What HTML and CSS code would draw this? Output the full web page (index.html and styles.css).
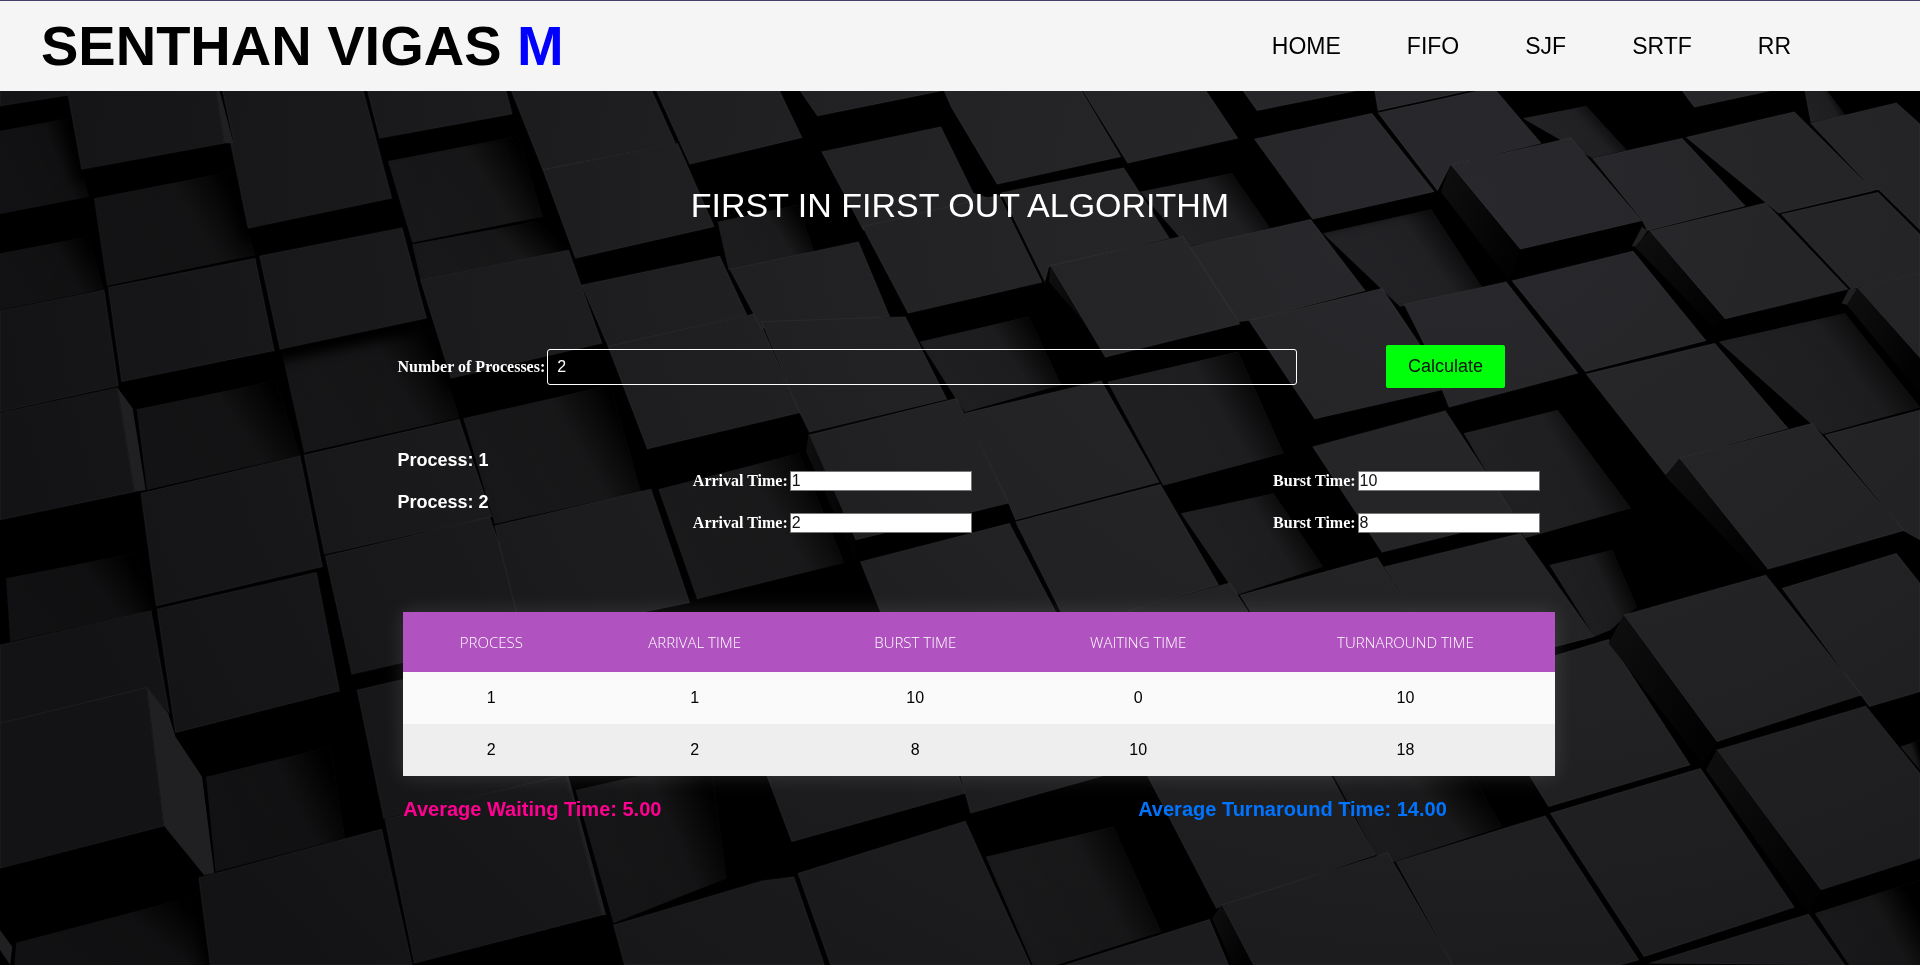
FILE: index.html
```html
<!DOCTYPE html>
<html lang="en">
<head>
<meta charset="utf-8">
<title>FIFO Scheduling</title>
<link rel="stylesheet" href="styles.css">
</head>
<body>
<svg class="backdrop" viewBox="0 0 1920 965" preserveAspectRatio="xMidYMid slice" aria-hidden="true">
  <defs>
    <radialGradient id="lit" gradientUnits="userSpaceOnUse" cx="3600" cy="600" r="3700">
      <stop offset="0" stop-color="#29292d"/>
      <stop offset="0.4" stop-color="#222224"/>
      <stop offset="0.75" stop-color="#19191b"/>
      <stop offset="1" stop-color="#131315"/>
    </radialGradient>
    <linearGradient id="sunk" x1="0.1" y1="0.8" x2="1" y2="0.4">
      <stop offset="0" stop-color="#000" stop-opacity="0.1"/>
      <stop offset="0.65" stop-color="#000" stop-opacity="0.2"/>
      <stop offset="0.95" stop-color="#000" stop-opacity="0.9"/>
      <stop offset="1" stop-color="#000"/>
    </linearGradient>
    <linearGradient id="wall" x1="0" y1="0" x2="1" y2="0.6">
      <stop offset="0" stop-color="#0f0f10"/>
      <stop offset="1" stop-color="#020202"/>
    </linearGradient>
    <filter id="soft" x="0" y="0" width="1" height="1" color-interpolation-filters="sRGB"><feGaussianBlur stdDeviation="0.6"/></filter>
    <filter id="cast" x="-0.05" y="-0.05" width="1.1" height="1.1" color-interpolation-filters="sRGB"><feGaussianBlur stdDeviation="16"/></filter>
    <g id="pits">
      <path d="M0 392L168 355 218 590 0 642z"/>
      <path d="M230 595L565 515 625 765 262 858z"/>
      <path d="M0 760L215 710 255 868 0 930z"/>
      <path d="M950 483L1270 408 1330 650 1010 728z"/>
      <path d="M1010 733L1310 665 1393 750 1030 840z"/>
      <path d="M335 1228L675 1142 735 1365 360 1470z"/>
      <path d="M690 1055L1050 963 1125 1253 745 1358z"/>
      <path d="M1135 1255L1495 1155 1570 1475 1212 1572z"/>
      <path d="M15 1735L330 1660 378 1830 25 1925z"/>
      <path d="M505 2330L810 2240 845 2515 528 2615z"/>
      <path d="M40 2828L485 2685 520 2895 35 2895z"/>
      <path d="M1410 2370L1740 2280 1780 2635 1503 2770z"/>
      <path d="M2415 2570L2728 2480 2845 2795 2590 2895 2530 2895z"/>
      <path d="M3266 2325L3605 2325 3680 2480 3416 2585 3370 2565z"/>
      <path d="M4446 2740L4704 2640V2895H4530z"/>
      <path d="M4656 2240L4704 2220V2310z"/>
      <path d="M2793 575L3018 520 3115 690 2910 740z"/>
      <path d="M3731 355L3886 318 3985 450 3900 474z"/>
      <path d="M4421 272H4476L4521 345 4436 368z"/>
      <path d="M3241 700L3506 628 3630 860 3430 920z"/>
      <path d="M4211 1025L4520 940 4704 1222 4466 1303z"/>
      <path d="M3586 1300L3816 1230 3996 1525 3736 1615z"/>
      <path d="M3796 1695L3950 1650 4010 1820 3946 1890 3906 1910z"/>
      <path d="M1758 665L1953 615 1995 755 1785 810z"/>
      <path d="M2253 1025L2520 950 2600 1155 2363 1237z"/>
      <path d="M1613 1468L1958 1360 2068 1688 1708 1798z"/>
      <path d="M2893 1540L3120 1480 3241 1700 3030 1785z"/>
      <path d="M2713 1145L3033 1055 3145 1360 2850 1457z"/>
    </g>
    <g id="tops">
      <path d="M0 270H165V286L0 318z"/>
      <path d="M165 272H530L550 430 200 508z"/>
      <path d="M545 272H890L960 595 608 685 565 430 572 424z"/>
      <path d="M900 272H1240L1255 342 930 415z"/>
      <path d="M1252 272H1597L1655 430 1330 510 1265 310z"/>
      <path d="M1330 510L1660 430 1750 680 1410 775z"/>
      <path d="M1425 855L1763 768 1830 945 1490 1040z"/>
      <path d="M1490 1040L1853 940 1960 1238 1586 1347z"/>
      <path d="M636 768L985 683 1045 955 686 1048z"/>
      <path d="M265 862L625 775 672 1052 298 1145z"/>
      <path d="M0 932L255 870 290 1157 0 1235z"/>
      <path d="M1030 840L1393 750 1475 1030 1105 1135z"/>
      <path d="M0 1238L288 1163 330 1475 0 1560z"/>
      <path d="M345 1480L735 1367 790 1700 383 1818z"/>
      <path d="M745 1365L1125 1258 1205 1550 795 1663z"/>
      <path d="M797 1668L1200 1552 1300 1900 862 2023z"/>
      <path d="M1212 1577L1595 1467 1690 1808 1280 1910z"/>
      <path d="M385 1827L775 1717 832 2073 430 2198z"/>
      <path d="M0 1935L370 1832 415 2140 360 2065 0 2170z"/>
      <path d="M0 2170L360 2063 402 2478 0 2605z"/>
      <path d="M487 2633L935 2487 1010 2895H515z"/>
      <path d="M875 2070L1300 1950 1385 2325 940 2455z"/>
      <path d="M943 2457L1385 2325 1475 2745 1015 2890z"/>
      <path d="M1503 2775L1868 2642 1945 2630 2020 2895H1530z"/>
      <path d="M1878 2325H2348L2365 2380 1940 2525z"/>
      <path d="M1955 2620L2365 2463 2525 2895H2035z"/>
      <path d="M2353 2325H2710L2378 2440z"/>
      <path d="M2810 2325H3260L3370 2565 2980 2725z"/>
      <path d="M2993 2715L3400 2558 3560 2895H3070z"/>
      <path d="M2608 2895L2963 2758 3010 2895z"/>
      <path d="M3420 2585L3786 2447 4015 2880 3970 2895H3560z"/>
      <path d="M3746 2325L3720 2000 3941 1918 4141 2295 3794 2420z"/>
      <path d="M3798 2440L4166 2305 4396 2722 4028 2870z"/>
      <path d="M4366 1765L4646 1660 4704 1750V2075L4580 2120z"/>
      <path d="M3978 1845L4326 1725 4561 2085 4206 2225z"/>
      <path d="M4206 2250L4571 2118 4704 2320V2575L4461 2670z"/>
      <path d="M4040 2890L4431 2742 4520 2895z"/>
      <path d="M1608 272H1910L1965 413 1690 493z"/>
      <path d="M1960 272H2310L2003 348z"/>
      <path d="M2013 455L2305 380 2385 580 2440 600 2115 690z"/>
      <path d="M2113 680L2448 585 2553 847 2225 940z"/>
      <path d="M2313 272H2650L2746 470 2443 553 2330 320z"/>
      <path d="M2653 272H2955L3033 415 2763 490z"/>
      <path d="M2453 578L2753 503 2865 715 2570 800 2560 845z"/>
      <path d="M3045 272H3326L3136 318 3080 332z"/>
      <path d="M3073 417L3361 340 3514 575 3216 658z"/>
      <path d="M3368 272H3600L3376 332z"/>
      <path d="M3376 338L3616 274 3666 272 3776 430 3554 495 3522 572z"/>
      <path d="M3901 475L4121 415 4276 618 4036 692 4023 660z"/>
      <path d="M3554 495L3848 413 4023 662 3724 748z"/>
      <path d="M4121 272H4340L4151 322z"/>
      <path d="M4131 412L4396 335 4591 572 4358 640z"/>
      <path d="M4436 370L4646 308 4704 372V690L4604 570 4590 570z"/>
      <path d="M4364 643L4601 577 4704 703V820L4536 868z"/>
      <path d="M4041 693L4326 608 4528 868 4226 957z"/>
      <path d="M2910 742L3211 658 3345 872 3070 960 3035 965z"/>
      <path d="M2573 797L2898 708 3038 972 2708 1072z"/>
      <path d="M3440 913L3690 845 3866 1120 3550 1222 3490 1035z"/>
      <path d="M3060 962L3386 865 3551 1165 3221 1257z"/>
      <path d="M3704 842L4001 753 4180 1022 3884 1115z"/>
      <path d="M3886 1122L4201 1030 4381 1285 4116 1375 4081 1425z"/>
      <path d="M4471 1305L4704 1230V1620L4664 1592z"/>
      <path d="M4114 1375L4439 1270 4664 1592 4331 1708z"/>
      <path d="M4551 865L4704 820V1075z"/>
      <path d="M3216 1340L3541 1232 3716 1557 3386 1657z"/>
      <path d="M3391 1700L3726 1600 3906 1910 3811 1940 3461 1836z"/>
      <path d="M2750 1838L3013 1748 3060 1838z"/>
      <path d="M3038 1785L3374 1672 3461 1838H3065z"/>
      <path d="M1788 808L2103 725 2180 950 1865 985z"/>
      <path d="M1866 965L2218 950 2320 1198 1983 1297 1960 1240z"/>
      <path d="M2363 1240L2698 1142 2840 1447 2488 1560 2471 1510z"/>
      <path d="M1981 1305L2343 1195 2471 1510 2096 1620z"/>
      <path d="M2108 1685L2473 1570 2588 1838H2158z"/>
      <path d="M2488 1565L2843 1453 2986 1755 2750 1838H2600z"/>
    </g>
  </defs>
  <rect width="1920" height="965" fill="#000"/>
  <g transform="scale(0.408163 0.333333)" filter="url(#soft)">
    <use href="#pits" fill="url(#lit)"/>
    <use href="#pits" fill="url(#sunk)"/>
    <use href="#tops" x="-12" y="40" fill="#000" filter="url(#cast)"/>
    <use class="tops" href="#tops" fill="url(#lit)"/>
    <g fill="#202022">
      <path d="M288 1163L325 1225 357 1470 330 1475z"/>
      <path d="M360 2063L412 2140 430 2210 495 2330 525 2620 500 2625 402 2478z"/>
      <path d="M530 272H538L572 430 550 430z"/>
      <path d="M1385 2325H1392L1485 2745 1475 2745z"/>
      <path d="M4023 680L4036 692 4010 740 3998 738z"/>
      <path d="M4530 868L4550 866 4525 915 4512 910z"/>
      <path d="M0 2790L30 2840 25 2895 0 2850z"/>
    </g>
    <g fill="url(#wall)">
      <path d="M3554 495L3724 748 3696 840 3530 575z"/>
      <path d="M4041 693L4226 957 4200 985 4005 740z"/>
      <path d="M4114 1375L4331 1708 4300 1710 4081 1430z"/>
      <path d="M3978 1845L4206 2225 4170 2290 3941 1930z"/>
      <path d="M4206 2250L4461 2670 4430 2740 4180 2310z"/>
      <path d="M4551 865L4704 1075V1180L4525 915z"/>
      <path d="M2993 2715L3070 2895H3020L2970 2755z"/>
      <path d="M2573 797L2708 1072 2650 960 2570 845z"/>
      <path d="M1981 1300L2096 1620 2095 1675 1975 1355z"/>
    </g>
  </g>
</svg>

<header class="topbar">
  <h1 class="brand">SENTHAN VIGAS <span class="brand-initial">M</span></h1>
  <nav class="menu">
    <a href="#home">HOME</a>
    <a href="#fifo">FIFO</a>
    <a href="#sjf">SJF</a>
    <a href="#srtf">SRTF</a>
    <a href="#rr">RR</a>
  </nav>
</header>

<main class="page">
  <h2 class="title">FIRST IN FIRST OUT ALGORITHM</h2>

  <form class="scheduler">
    <div class="count-row">
      <label for="count">Number of Processes:</label>
      <input class="count" id="count" type="text" value="2">
      <button class="calculate" type="button">Calculate</button>
    </div>

    <div class="processes">
      <div class="process-row">
        <h3 class="process-name">Process: 1</h3>
        <div class="field"><label for="arrival1">Arrival Time:</label><input id="arrival1" type="text" value="1"></div>
        <div class="field"><label for="burst1">Burst Time:</label><input id="burst1" type="text" value="10"></div>
      </div>
      <div class="process-row">
        <h3 class="process-name">Process: 2</h3>
        <div class="field"><label for="arrival2">Arrival Time:</label><input id="arrival2" type="text" value="2"></div>
        <div class="field"><label for="burst2">Burst Time:</label><input id="burst2" type="text" value="8"></div>
      </div>
    </div>
  </form>

  <section class="results">
    <table class="schedule">
      <colgroup><col class="c-process"><col class="c-arrival"><col class="c-burst"><col class="c-waiting"><col class="c-turnaround"></colgroup>
      <thead>
        <tr><th>Process</th><th>Arrival Time</th><th>Burst Time</th><th>Waiting Time</th><th>Turnaround Time</th></tr>
      </thead>
      <tbody>
        <tr><td>1</td><td>1</td><td>10</td><td>0</td><td>10</td></tr>
        <tr><td>2</td><td>2</td><td>8</td><td>10</td><td>18</td></tr>
      </tbody>
    </table>
    <div class="averages">
      <p class="avg-waiting">Average Waiting Time: 5.00</p>
      <p class="avg-turnaround">Average Turnaround Time: 14.00</p>
    </div>
  </section>
</main>
</body>
</html>
```
FILE: styles.css
```css
* {
  box-sizing: border-box;
  margin: 0;
}

body {
  min-height: 100vh;
  background: #000;
  color: #fff;
  font-family: "Liberation Sans", Arial, sans-serif;
}

.backdrop {
  position: fixed;
  inset: 0;
  z-index: -1;
  width: 100%;
  height: 100%;
}

.tops {
  stroke: #fff;
  stroke-opacity: 0.035;
  stroke-width: 4;
}

.topbar {
  display: flex;
  align-items: center;
  justify-content: space-between;
  padding: 13px 129px 13px 41px;
  border-top: 1px solid #483d6b;
  background: #f5f5f5;
  color: #000;
}

.brand {
  font-size: 56px;
  line-height: 64px;
}

.brand-initial {
  color: #00f;
}

.menu {
  display: flex;
  gap: 66px;
  font-size: 23px;
  line-height: 28px;
}

.menu a {
  color: #000;
  text-decoration: none;
}

.title {
  padding-top: 94px;
  font-size: 34px;
  font-weight: 400;
  line-height: 40px;
  text-align: center;
}

.scheduler {
  margin: 120px 18% 0 20.7%;
  font-size: 16px;
}

.scheduler label {
  font-family: "Liberation Serif", "Times New Roman", serif;
  font-weight: 700;
  white-space: nowrap;
}

.count-row {
  display: flex;
  align-items: center;
  gap: 2px;
}

.count {
  width: 63.7%;
  height: 36px;
  padding: 0 9px;
  border: 1px solid #fff;
  border-radius: 3px;
  background: transparent;
  color: #fff;
  font: 16px "Liberation Sans", Arial, sans-serif;
}

.calculate {
  height: 43px;
  margin-left: 87px;
  padding: 0 22px;
  border: 0;
  border-radius: 2px;
  background: #00ff0a;
  color: #111;
  font: 18px "Liberation Sans", Arial, sans-serif;
}

.processes {
  margin-top: 60px;
}

.process-row {
  display: grid;
  grid-template-columns: 25.1% 49.3% auto;
  height: 42px;
}

.process-name {
  font-size: 18px;
  line-height: 24px;
}

.field {
  display: flex;
  align-items: center;
  gap: 2px;
  height: 20px;
  margin-top: 23px;
}

.field input {
  width: 182px;
  height: 20px;
  padding: 0 1px;
  border: 1px solid #767676;
  background: #fff;
  color: #111;
  font: 16px "Liberation Sans", Arial, sans-serif;
}

.results {
  width: 60%;
  margin: 80px 0 0 21%;
}

.schedule {
  width: 100%;
  table-layout: fixed;
  border-collapse: collapse;
  box-shadow: 0 0 20px rgba(255, 255, 255, 0.13);
  color: #000;
  font-size: 16px;
  text-align: center;
}

.c-process { width: 15.3%; }
.c-arrival { width: 20%; }
.c-burst { width: 18.3%; }
.c-waiting { width: 20.4%; }
.c-turnaround { width: 26%; }

.schedule th {
  height: 60px;
  padding: 0;
  background: #b052bf;
  color: #fff;
  font-family: "Open Sans", sans-serif;
  font-size: 15px;
  font-weight: 300;
  text-transform: uppercase;
}

.schedule td {
  height: 52px;
  padding: 0;
  background: #fafafa;
}

.schedule tr:nth-child(even) td {
  background: #eee;
}

.averages {
  display: grid;
  grid-template-columns: 63.8% auto;
  padding-top: 21px;
  font-size: 20px;
  font-weight: 700;
  line-height: 24px;
}

.avg-waiting { color: #ff0090; }
.avg-turnaround { color: #0073ff; }
```
